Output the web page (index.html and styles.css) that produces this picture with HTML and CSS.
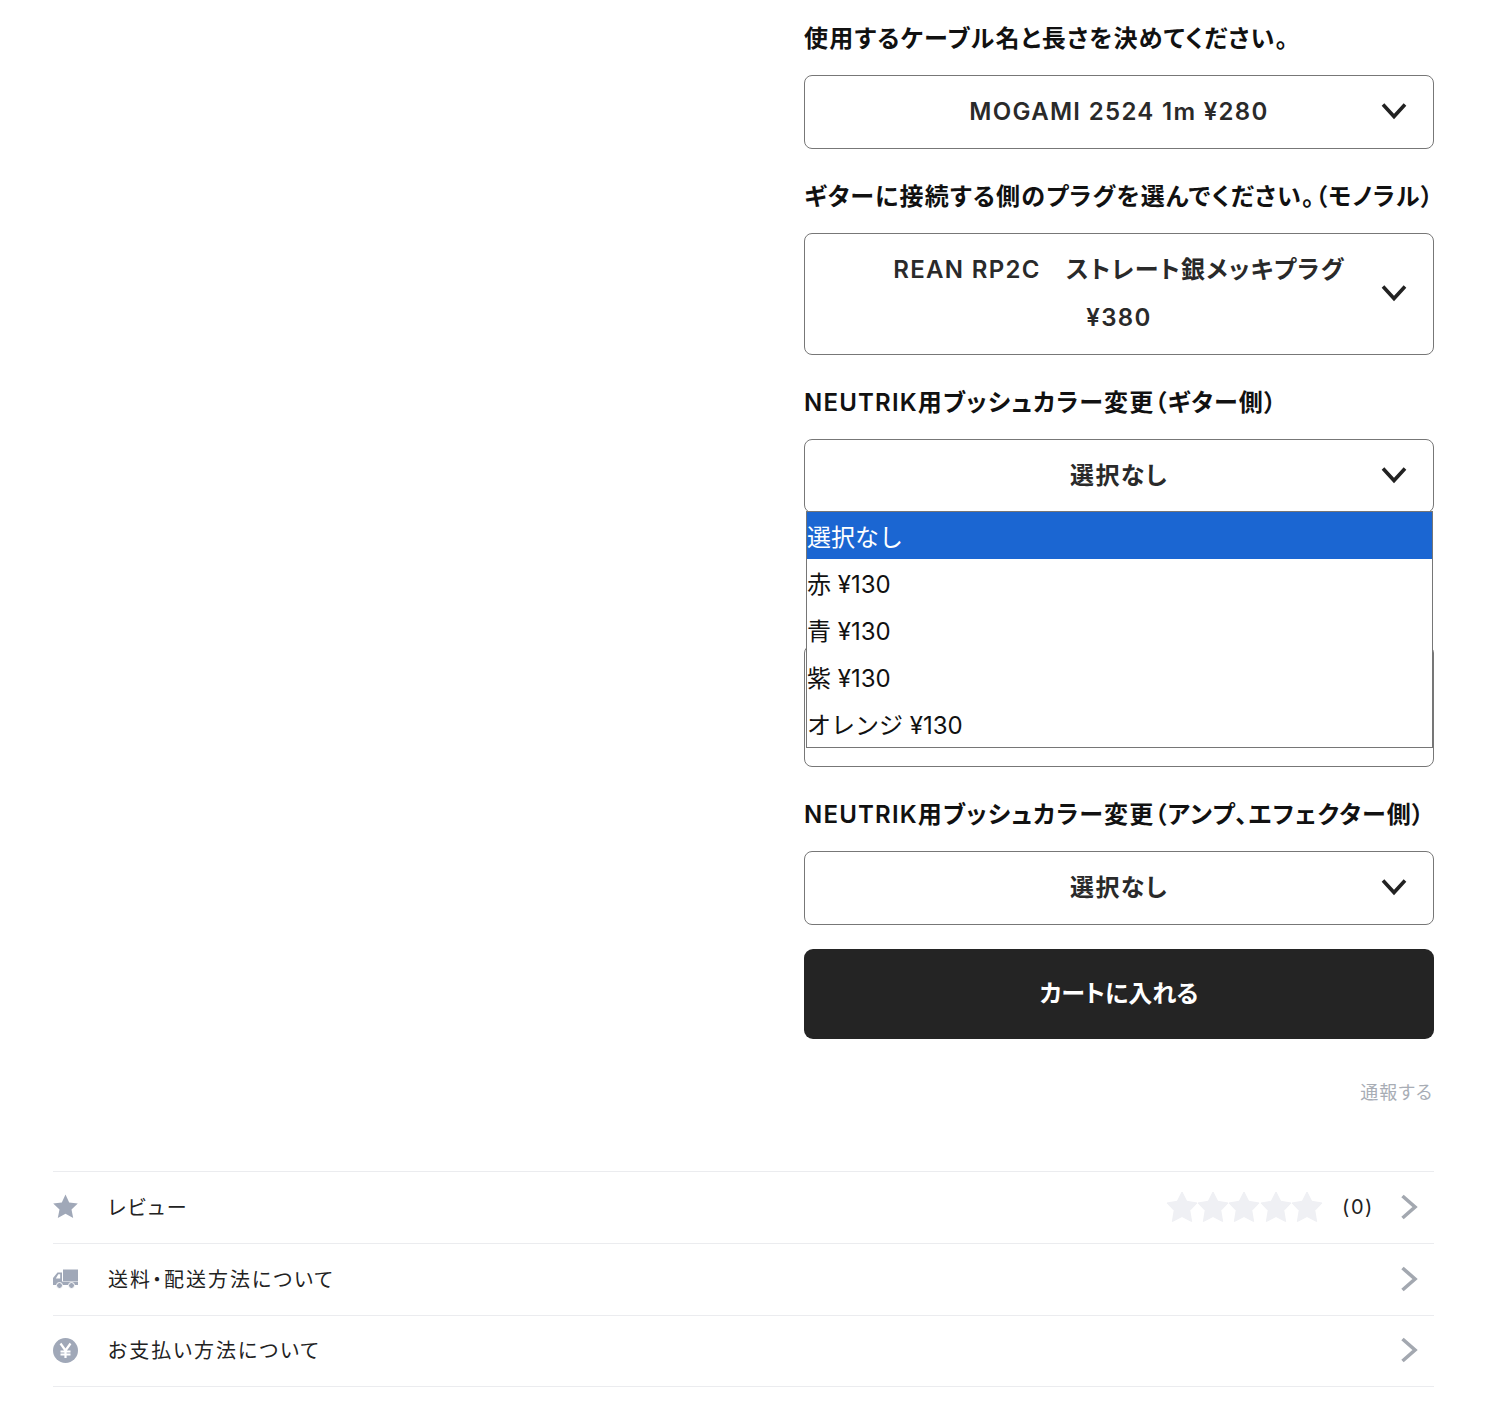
FILE: index.html
```html
<!DOCTYPE html>
<html lang="ja">
<head>
<meta charset="utf-8">
<title>カートに入れる</title>
<link rel="stylesheet" href="styles.css">
</head>
<body>
<svg class="defs" width="0" height="0" aria-hidden="true">
  <defs>
    <symbol id="chev-down" viewBox="0 0 26 18"><path d="M2 2.500 13 14.500 24 2.500" fill="none" stroke="currentColor" stroke-width="3.600"/></symbol>
    <symbol id="chev-right" viewBox="0 0 18 26"><path d="M2.500 2 15 13 2.500 24" fill="none" stroke="currentColor" stroke-width="3.600"/></symbol>
    <symbol id="star" viewBox="0 0 32 32"><path d="M16 1 20.700 10.300 31 12 23.800 19.500 25.600 30.500 16 25.500 6.400 30.500 8.200 19.500 1 12 11.300 10.300Z" fill="currentColor" stroke="currentColor" stroke-width="1" stroke-linejoin="round"/></symbol>
  </defs>
</svg>
<main class="page">
  <section class="product">
    <form class="options">
      <div class="option">
        <p class="option-label">使用するケーブル名と長さを決めてください。</p>
        <div class="select"><span>MOGAMI 2524 1m ¥280</span><svg class="chevron"><use href="#chev-down"/></svg></div>
      </div>
      <div class="option">
        <p class="option-label">ギターに接続する側のプラグを選んでください。（モノラル）</p>
        <div class="select"><span>REAN RP2C　ストレート銀メッキプラグ ¥380</span><svg class="chevron"><use href="#chev-down"/></svg></div>
      </div>
      <div class="option">
        <p class="option-label">NEUTRIK用ブッシュカラー変更（ギター側）</p>
        <div class="select"><span>選択なし</span><svg class="chevron"><use href="#chev-down"/></svg>
          <ul class="dropdown">
            <li class="dropdown-item is-selected">選択なし</li>
            <li class="dropdown-item">赤 ¥130</li>
            <li class="dropdown-item">青 ¥130</li>
            <li class="dropdown-item">紫 ¥130</li>
            <li class="dropdown-item">オレンジ ¥130</li>
          </ul>
        </div>
      </div>
      <div class="option option-covered">
        <div class="select select-covered"></div>
      </div>
      <div class="option">
        <p class="option-label">NEUTRIK用ブッシュカラー変更（アンプ、エフェクター側）</p>
        <div class="select"><span>選択なし</span><svg class="chevron"><use href="#chev-down"/></svg></div>
      </div>
      <button class="cart" type="button">カートに入れる</button>
      <a class="report">通報する</a>
    </form>
  </section>
  <ul class="info">
    <li class="info-row">
      <svg class="info-icon" viewBox="0 0 25 25"><path d="M12.500 .5 16.200 8.400 24.800 9.500 18.500 15.400 20.200 24 12.500 19.800 4.800 24 6.500 15.400 .2 9.500 8.800 8.400Z" fill="currentColor"/></svg>
      <span class="info-text">レビュー</span>
      <span class="stars">
        <svg class="star"><use href="#star"/></svg><svg class="star"><use href="#star"/></svg><svg class="star"><use href="#star"/></svg><svg class="star"><use href="#star"/></svg><svg class="star"><use href="#star"/></svg>
      </span>
      <span class="count">(0)</span>
      <svg class="arrow"><use href="#chev-right"/></svg>
    </li>
    <li class="info-row">
      <svg class="info-icon" viewBox="0 0 25 25"><path d="M10 3.500H25V15H10z" fill="currentColor"/><path d="M9 6.500H4.500L0 12V19H9zM7.200 8.300V12.500H2.800L5.300 8.300z" fill="currentColor" fill-rule="evenodd"/><path d="M0 15.500H25V19H0z" fill="currentColor"/><circle cx="6.500" cy="19.500" r="3" fill="currentColor" stroke="#fff"/><circle cx="18.500" cy="19.500" r="3" fill="currentColor" stroke="#fff"/></svg>
      <span class="info-text">送料・配送方法について</span>
      <svg class="arrow"><use href="#chev-right"/></svg>
    </li>
    <li class="info-row">
      <svg class="info-icon" viewBox="0 0 25 25"><circle cx="12.500" cy="12.500" r="12.500" fill="currentColor"/><path d="M7.500 5.500 12.500 12.500 17.500 5.500M12.500 12.500V20M7.500 13.500H17.500M7.500 16.500H17.500" fill="none" stroke="#fff" stroke-width="2.200"/></svg>
      <span class="info-text">お支払い方法について</span>
      <svg class="arrow"><use href="#chev-right"/></svg>
    </li>
  </ul>
</main>
</body>
</html>
```
FILE: styles.css
```css
* { box-sizing: border-box; }
html, body { margin: 0; padding: 0; background: #fff; }
body {
  font-family: Inter, "Noto Sans CJK JP", sans-serif;
  color: #222;
  height: 1423px;
  overflow: hidden;
}
.defs { position: absolute; }
.page { padding: 15px 56px 0 53px; }
.product { display: flex; justify-content: flex-end; }
.options { width: 630px; display: flex; flex-direction: column; }
.option { margin-bottom: 24px; }
.option-covered { padding-top: 108px; }
.option-label {
  margin: 0 0 12px;
  font-size: 24px;
  line-height: 48px;
  font-weight: 600;
  color: #111;
  letter-spacing: 0.05em;
  font-feature-settings: "palt";
}
.select {
  position: relative;
  border: 1px solid #777;
  border-radius: 8px;
  padding: 12px 72px;
  background: #fff;
  text-align: center;
  font-size: 24px;
  line-height: 48px;
  font-weight: 600;
  letter-spacing: 0.055em;
  font-feature-settings: "palt";
  color: #2a2a2a;
}
.select-covered { height: 122px; }
.chevron {
  position: absolute;
  right: 26px;
  top: 50%;
  width: 26px;
  height: 18px;
  margin-top: -10px;
  color: #222;
}
.dropdown {
  position: absolute;
  top: 71px;
  left: 1px;
  right: 0;
  z-index: 2;
  margin: 0;
  padding: 0;
  list-style: none;
  border: 1px solid #767676;
  background: #fff;
  text-align: left;
  letter-spacing: 0;
  font-feature-settings: normal;
}
.dropdown-item {
  height: 47px;
  line-height: 43px;
  padding-top: 4px;
  font-size: 24px;
  font-weight: 400;
  color: #111;
}
.dropdown-item.is-selected { background: #1b66d2; color: #fff; }
.cart {
  display: block;
  width: 100%;
  height: 90px;
  padding: 0 0 6px;
  border: 0;
  border-radius: 9px;
  background: #242424;
  color: #fff;
  font: 700 24px Inter, "Noto Sans CJK JP", sans-serif;
  font-feature-settings: "palt";
}
.report {
  align-self: flex-end;
  margin: 40px 1px 65px 0;
  font-size: 18px;
  line-height: 27px;
  color: #a8adb5;
  letter-spacing: 0.06em;
  font-feature-settings: "palt";
}
.info { margin: 0; padding: 0; list-style: none; border-top: 1px solid #ebecef; }
.info-row {
  display: flex;
  align-items: center;
  height: 72px;
  padding-bottom: 2px;
  border-bottom: 1px solid #ebecef;
  font-size: 20px;
  color: #222;
}
.info-row:last-child { height: 71px; }
.info-row:last-child .info-text { margin-bottom: 2px; }
.info-icon { width: 25px; height: 25px; color: #a0a8b8; flex: none; }
.info-text { margin-left: 30px; flex: 1; font-feature-settings: "palt"; letter-spacing: 0.1em; }
.stars { display: flex; color: #eff0f4; margin-right: 19px; }
.star { width: 32px; height: 32px; margin-right: -0.750px; }
.star:last-child { margin-right: 0; }
.count { margin-right: 26px; letter-spacing: 0.08em; }
.arrow { width: 18px; height: 26px; margin-right: 16px; color: #a3a8b0; flex: none; }
```
